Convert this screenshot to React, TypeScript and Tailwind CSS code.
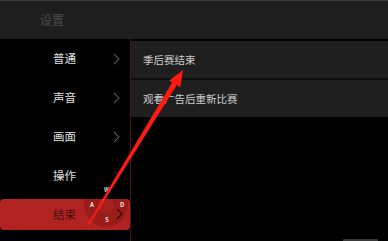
import React from "react";

const Chevron = ({ color = "#525252" }: { color?: string }) => (
  <svg width="7" height="12" viewBox="0 0 7 12" fill="none">
    <path d="M1 1 L6 6 L1 11" stroke={color} strokeWidth="1.1" />
  </svg>
);

const items = ["普通", "声音", "画面", "操作"];

export default function App() {
  return (
    <div className="relative w-[388px] h-[241px] bg-black overflow-hidden font-['Noto_Sans_CJK_SC','Noto_Sans',sans-serif]">
      <div className="h-[39px] bg-[#1e1e1e] border-t border-[#3a3a3a] flex items-center pl-[40px] text-[#4d4d4d] text-[12px]">
        设置
      </div>
      <div className="flex h-[202px]">
        <div className="w-[131px] border-r border-[#4a1212] flex flex-col">
          {items.map((t) => (
            <div key={t} className="h-[39px] flex items-center text-[#e0e0e0] text-[11.5px]">
              <span className="ml-[53px]">{t}</span>
              <span className="ml-auto mr-[10px] flex">
                <Chevron color={t === "操作" ? "#262626" : "#525252"} />
              </span>
            </div>
          ))}
          <div className="h-[39px] pt-[4px] pb-[4px]">
            <div className="relative h-[31px] w-[130px] rounded-[4px] bg-[#b02320] overflow-hidden flex items-center text-[#450e0d] text-[11.5px]">
              <span className="ml-[53px]">结束</span>
              <div className="absolute left-[84px] top-[-16px] w-[44px] h-[44px] rounded-full bg-[#971c1a]" />
              <div className="absolute left-[98px] top-[-2px] w-[16px] h-[16px] rounded-full bg-[#a42120]" />
              <span className="absolute left-[116px] top-[9px] flex">
                <Chevron color="#2a0908" />
              </span>
            </div>
          </div>
        </div>
        <div className="flex-1 flex flex-col pt-[2px]">
          <div className="h-[37px] bg-[#1f1f1f] flex items-center pl-[12px] text-[#cdcdcd] text-[10.5px]">
            季后赛结束
          </div>
          <div className="h-[2px] bg-[#0e0e0e]" />
          <div className="h-[37px] bg-[#1f1f1f] flex items-center pl-[12px] text-[#cdcdcd] text-[10.5px]">
            观看广告后重新比赛
          </div>
        </div>
      </div>
      <div className="absolute left-[104px] top-[185px] text-[6px] font-bold text-[#d0d0d0]">W</div>
      <div className="absolute left-[90px] top-[200px] text-[6px] font-bold text-[#e8e8e8]">A</div>
      <div className="absolute left-[120px] top-[200px] text-[6px] font-bold text-[#e8e8e8]">D</div>
      <div className="absolute left-[105px] top-[215px] text-[6px] font-bold text-[#e8e8e8]">S</div>
      <div className="absolute left-[343px] top-[239px] w-[35px] h-[2px] bg-[#3a3a3a] rounded-t-[1px]" />
      <svg className="absolute left-0 top-0" width="388" height="241" viewBox="0 0 388 241">
        <polygon points="87.4,224.2 89.2,225 176.9,84.8 172.5,82.1" fill="#ff1a12" />
        <polygon points="183,70 180.3,87.3 169.2,80.4" fill="#ff1a12" />
      </svg>
    </div>
  );
}
